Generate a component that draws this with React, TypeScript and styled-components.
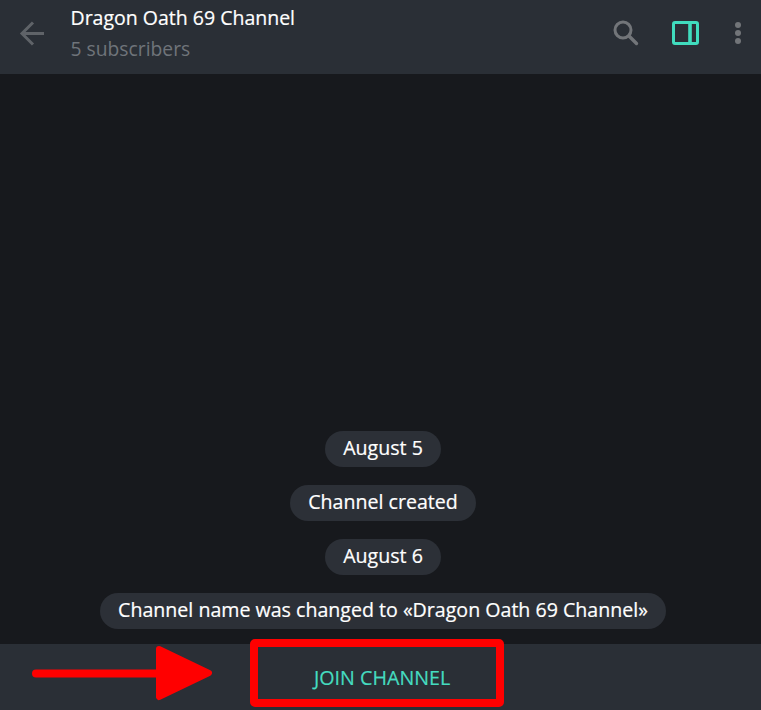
import React from "react";
import styled, { createGlobalStyle } from "styled-components";

const Global = createGlobalStyle`
  html, body { margin: 0; padding: 0; background: #17191d; }
  body { font-family: "Open Sans", "Noto Sans", sans-serif; }
`;

const Page = styled.div`
  position: relative;
  width: 761px;
  height: 710px;
  display: flex;
  flex-direction: column;
  overflow: hidden;
  background: #17191d;
`;

const Header = styled.header`
  height: 74px;
  flex: none;
  display: flex;
  align-items: flex-start;
  background: #2a2f36;
`;

const BackButton = styled.div`
  width: 70.5px;
  height: 66px;
  flex: none;
  display: flex;
  align-items: center;
  padding-left: 19px;
  box-sizing: border-box;
`;

const Titles = styled.div`
  flex: 1;
  display: flex;
  flex-direction: column;
  padding-top: 5px;
`;

const Title = styled.div`
  color: #ffffff;
  font-size: 19.5px;
  line-height: 26px;
  font-weight: 500;
  -webkit-text-stroke: 0.2px #ffffff;
`;

const Subtitle = styled.div`
  color: #6f747a;
  font-size: 19.3px;
  line-height: 26px;
  margin-top: 5px;
`;

const Tools = styled.div`
  display: flex;
  align-items: center;
  height: 66px;
  flex: none;
  padding-right: 20px;
`;

const ToolSlot = styled.div<{ $w: number; $gap?: number }>`
  width: ${(p) => p.$w}px;
  margin-left: ${(p) => p.$gap ?? 0}px;
  height: 66px;
  display: flex;
  align-items: center;
  justify-content: center;
`;

const Chat = styled.main`
  flex: 1;
  display: flex;
  flex-direction: column;
  align-items: center;
  justify-content: flex-end;
  gap: 18px;
  padding: 0 0 15px 5px;
`;

const Pill = styled.div`
  height: 36px;
  box-sizing: border-box;
  padding: 0 18px;
  border-radius: 18px;
  background: #2c3037;
  color: #ffffff;
  font-size: 19.6px;
  font-weight: 500;
  line-height: 34px;
  white-space: nowrap;
  -webkit-text-stroke: 0.2px #ffffff;
`;

const Footer = styled.footer`
  height: 66px;
  flex: none;
  display: flex;
  align-items: flex-start;
  padding: 21px 0 0 314px;
  box-sizing: border-box;
  background: #2a2f36;
`;

const JoinLabel = styled.div`
  color: #45dcc0;
  font-size: 19.7px;
  line-height: 26px;
  font-weight: 500;
  white-space: nowrap;
  -webkit-text-stroke: 0.2px #45dcc0;
`;

const HighlightBox = styled.div`
  position: absolute;
  left: 250px;
  top: 639px;
  width: 254px;
  height: 68px;
  box-sizing: border-box;
  border: 8px solid #ff0000;
  border-radius: 5px;
`;

const ArrowMark = styled.svg`
  position: absolute;
  left: 30px;
  top: 644px;
`;

export default function App() {
  return (
    <Page>
      <Global />
      <Header>
        <BackButton>
          <svg width="26" height="26" viewBox="0 0 26 26" fill="none" stroke="#5f6368" strokeWidth="3">
            <path d="M25 13.5H3" />
            <path d="M14 2.5 3 13.5 14 24.5" />
          </svg>
        </BackButton>
        <Titles>
          <Title>Dragon Oath 69 Channel</Title>
          <Subtitle>5 subscribers</Subtitle>
        </Titles>
        <Tools>
          <ToolSlot $w={26}>
            <svg width="26" height="26" viewBox="0 0 26 26" fill="none" stroke="#727579" strokeWidth="3" strokeLinecap="round">
              <circle cx="10" cy="10" r="8" />
              <path d="M16 16 23.5 23.5" strokeWidth="3.4" />
            </svg>
          </ToolSlot>
          <ToolSlot $w={34} $gap={29}>
            <svg width="27" height="24" viewBox="0 0 27 24" fill="none" stroke="#40dcbe" strokeWidth="3">
              <rect x="1.5" y="1.5" width="24" height="21" rx="1.5" />
              <path d="M18 1.5V22.5" strokeWidth="3.6" />
            </svg>
          </ToolSlot>
          <ToolSlot $w={6} $gap={33}>
            <svg width="6" height="22" viewBox="0 0 6 22" fill="#727579">
              <circle cx="3" cy="3" r="3" />
              <circle cx="3" cy="11" r="3" />
              <circle cx="3" cy="19" r="3" />
            </svg>
          </ToolSlot>
        </Tools>
      </Header>
      <Chat>
        <Pill>August 5</Pill>
        <Pill>Channel created</Pill>
        <Pill>August 6</Pill>
        <Pill>Channel name was changed to «Dragon Oath 69 Channel»</Pill>
      </Chat>
      <Footer>
        <JoinLabel>JOIN CHANNEL</JoinLabel>
      </Footer>
      <ArrowMark width="186" height="64" viewBox="0 0 186 64">
        <path d="M6 29.5H130" stroke="#ff0000" strokeWidth="8" strokeLinecap="round" fill="none" />
        <path d="M129 5 179 29 129 53Z" fill="#ff0000" stroke="#ff0000" strokeWidth="6" strokeLinejoin="round" />
      </ArrowMark>
      <HighlightBox />
    </Page>
  );
}
